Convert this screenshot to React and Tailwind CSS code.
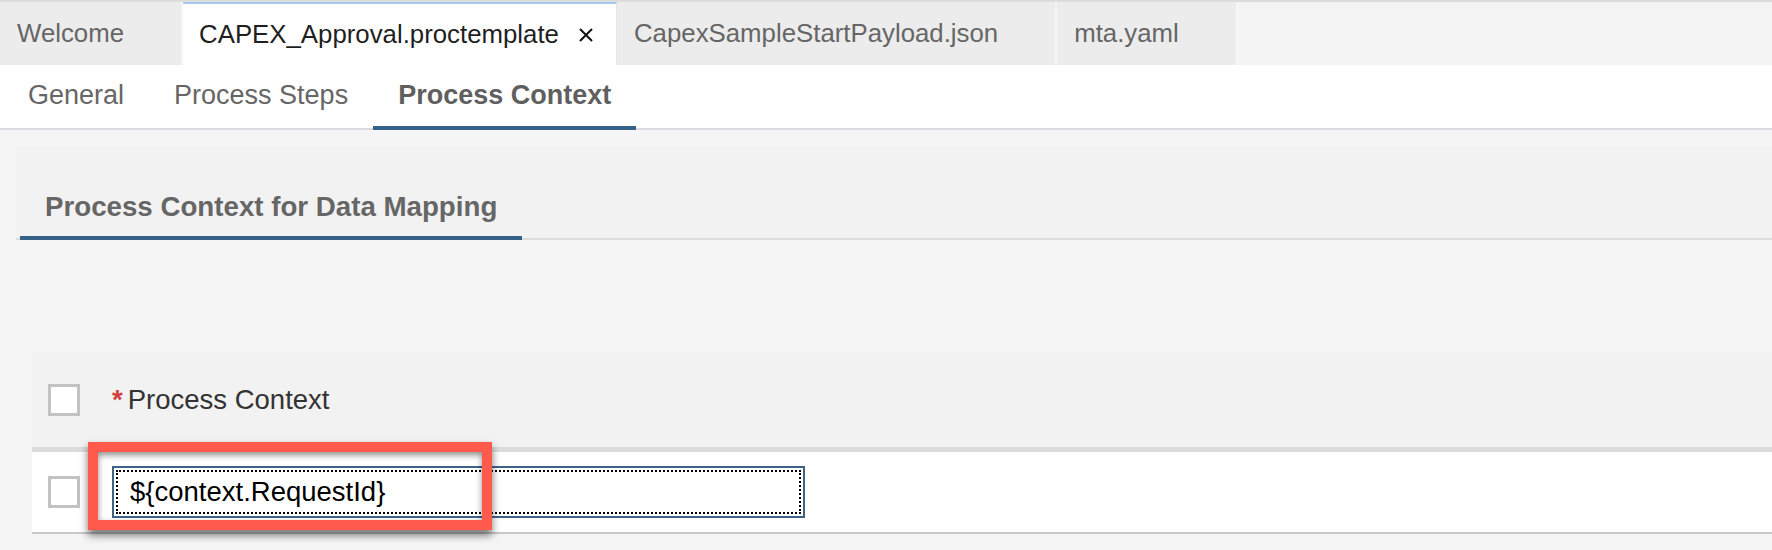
import React from "react";

const CloseIcon = ({ hidden }) => (
  <svg
    width="16"
    height="16"
    viewBox="0 0 16 16"
    className={hidden ? "invisible" : ""}
    fill="none"
    stroke="#111"
    strokeWidth="2"
  >
    <path d="M2 2 14 14M14 2 2 14" />
  </svg>
);

const FileTab = ({ label, active }) => (
  <div
    className={
      active
        ? "flex items-center gap-[19px] border-t-2 border-r border-t-[#a9c9ec] border-r-[#e6e6e6] bg-white pl-4 pr-[22px] text-[#1f1f1f]"
        : "flex items-center gap-[19px] border-r-2 border-[#f6f6f6] bg-[#ececec] pl-[17px] pr-[22px] text-[#666]"
    }
  >
    <span>{label}</span>
    <CloseIcon hidden={!active} />
  </div>
);

const EditorTab = ({ label, active }) => (
  <div
    className={
      active
        ? "-mb-[2px] flex items-center border-b-4 border-[#35618a] px-[25px] font-bold text-[#5f5f5f]"
        : "-mb-[2px] flex items-center border-b-4 border-transparent px-[25px] text-[#666]"
    }
  >
    {label}
  </div>
);

const Checkbox = () => (
  <div className="h-[32px] w-[32px] shrink-0 border-[3px] border-[#c2c2c2] bg-white" />
);

export default function App() {
  return (
    <div className="h-[550px] w-full overflow-hidden bg-[#f5f5f5] font-['Liberation_Sans',Arial,sans-serif]">
      {/* open files */}
      <div className="flex h-[65px] border-t-2 border-[#dcdcdc] bg-[#f3f3f3] text-[25.8px]">
        <FileTab label="Welcome" />
        <FileTab label="CAPEX_Approval.proctemplate" active />
        <FileTab label="CapexSampleStartPayload.json" />
        <FileTab label="mta.yaml" />
      </div>

      {/* editor tabs */}
      <div className="flex h-[65px] border-b-2 border-[#d9d9de] bg-white pl-[3px] text-[27px]">
        <EditorTab label="General" />
        <EditorTab label="Process Steps" />
        <EditorTab label="Process Context" active />
      </div>

      <div className="pl-4 pt-4">
        <div className="flex border-b-2 border-[#dcdcdc] bg-[#f2f2f2] pt-[44px]">
          <div className="-mb-[2px] ml-[4px] border-b-4 border-[#35618a] px-[25px] pb-[13px] text-[27.7px] font-bold leading-[33px] text-[#666]">
            Process Context for Data Mapping
          </div>
        </div>

        <div className="relative ml-4 mt-[112px]">
          <div className="flex h-[100px] items-center border-b-[5px] border-[#dcdcdc] bg-[#f2f2f2] pl-4">
            <Checkbox />
            <div className="ml-[32px] flex items-start text-[27.5px] text-[#333]">
              <span className="mr-[5px] font-bold text-[#d0403b]">*</span>
              <span>Process Context</span>
            </div>
          </div>

          <div className="flex h-[82px] items-center border-b-2 border-[#c8c8c8] bg-white pl-4">
            <Checkbox />
            <div className="ml-[32px] h-[52px] w-[693px] border-2 border-[#3e6388] bg-white p-[2px]">
              <div className="flex h-full items-center border-2 border-dotted border-black pl-[12px] text-[27.5px] text-black">
                {"${context.RequestId}"}
              </div>
            </div>
          </div>

          {/* annotation */}
          <div className="absolute left-[56px] top-[90px] h-[88px] w-[404px] border-[10px] border-[#ff5a4b] shadow-[0_5px_8px_rgba(0,0,0,0.55),inset_0_3px_6px_rgba(0,0,0,0.45)]" />
        </div>
      </div>
    </div>
  );
}
